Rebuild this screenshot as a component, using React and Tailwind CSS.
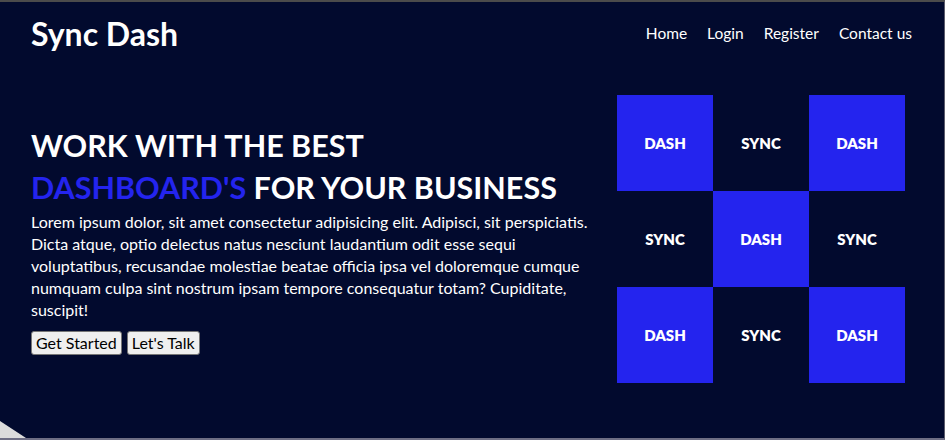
import React from 'react';

const tiles = ['DASH', 'SYNC', 'DASH', 'SYNC', 'DASH', 'SYNC', 'DASH', 'SYNC', 'DASH'];

function App() {
    return (
        <div className="relative h-[440px] w-full overflow-hidden bg-[#020a2e] border-t-2 border-t-[#4b4b4b] border-r border-r-[#5c5c6c] border-b-2 border-b-[#6e6e84] font-['Lato',sans-serif] text-white">
            {/* Header */}
            <header className="flex h-[64px] items-center justify-between pl-[31px] pr-[32px]">
                <h1 className="text-[32px] font-bold leading-none">Sync Dash</h1>
                <nav className="flex gap-[20px] text-[15.5px]">
                    <a href="#">Home</a>
                    <a href="#">Login</a>
                    <a href="#">Register</a>
                    <a href="#">Contact us</a>
                </nav>
            </header>

            {/* Hero */}
            <main className="mt-[29px] flex items-center justify-between pl-[31px] pr-[39px]">
                <div className="w-[560px]">
                    <h2 className="text-[30.5px] font-bold uppercase leading-[42px]">
                        Work with the best
                        <br />
                        <span className="text-[#2424ee]">Dashboard's</span> for your business
                    </h2>
                    <p className="mt-[3px] text-[16px] leading-[22px]">
                        Lorem ipsum dolor, sit amet consectetur adipisicing elit. Adipisci, sit perspiciatis. Dicta atque, optio delectus natus nesciunt laudantium odit esse sequi voluptatibus, recusandae molestiae beatae officia ipsa vel doloremque cumque numquam culpa sint nostrum ipsam tempore consequatur totam? Cupiditate, suscipit!
                    </p>
                    <div className="mt-[10px] flex gap-[5px]">
                        <button className="rounded-[3px] border border-[#767676] bg-[#efefef] px-[4px] py-px text-[16px] leading-[20px] text-black">Get Started</button>
                        <button className="rounded-[3px] border border-[#767676] bg-[#efefef] px-[4px] py-px text-[16px] leading-[20px] text-black">Let's Talk</button>
                    </div>
                </div>

                <div className="grid w-[288px] grid-cols-3">
                    {tiles.map((t, i) => (
                        <div
                            key={i}
                            className={`flex h-[96px] items-center justify-center text-[15px] font-extrabold ${t === 'DASH' ? 'bg-[#2424ee]' : ''}`}
                        >
                            {t}
                        </div>
                    ))}
                </div>
            </main>

            {/* corner fold */}
            <div className="absolute bottom-0 left-0 h-[17px] w-[26px] bg-[#dcdcdc] [clip-path:polygon(0_0,100%_100%,0_100%)]" />
        </div>
    );
}

export default App;
